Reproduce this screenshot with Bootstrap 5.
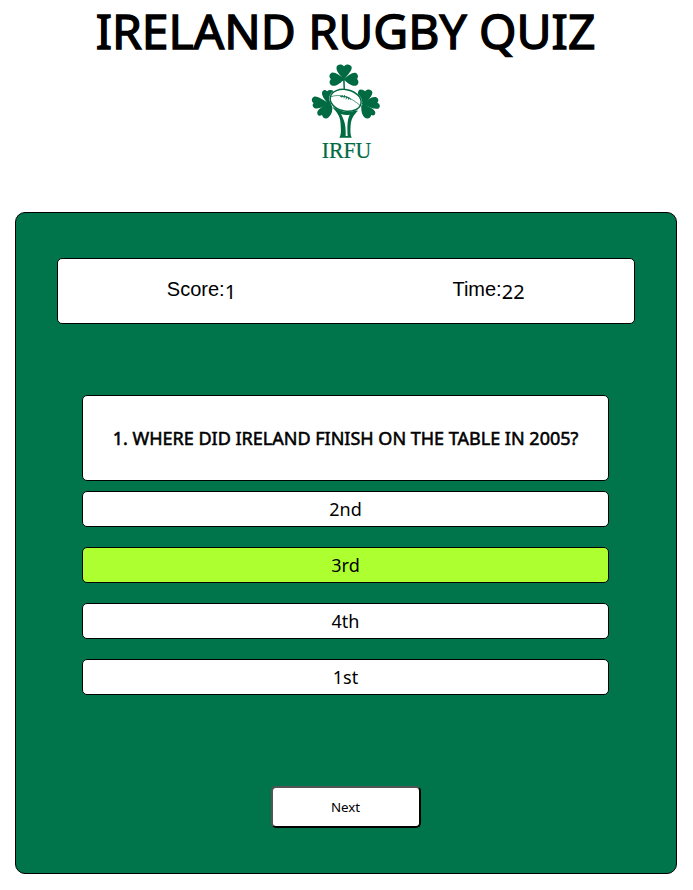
<!DOCTYPE html>
<html lang="en">
<head>
<meta charset="utf-8">
<meta name="viewport" content="width=device-width, initial-scale=1">
<title>Ireland Rugby Quiz</title>
<link rel="stylesheet" href="https://cdn.jsdelivr.net/npm/bootstrap@5.3.0/dist/css/bootstrap.min.css">
<style>
body{font-family:"Noto Sans",sans-serif;color:#000;background:#fff;line-height:1.36}
.page-head{width:691px}
.quiz-title{font-size:48px;line-height:62px;margin:0 0 -4px;font-weight:400;-webkit-text-stroke:1.4px #000;white-space:nowrap}
.logo{width:92px;height:106px}
.quiz-panel{width:662px;height:662px;margin:48px 0 0 15px;padding:45px 41px;background:#00754c;border:1px solid #000;border-radius:10px}
.box{background:#fff;border:1px solid #000;border-radius:5px}
.scores{height:66px;width:578px;font-size:20px;padding-right:2px}
.scores .tag{font-family:"Liberation Sans",Arial,sans-serif;line-height:23px;padding-top:3px}
.scores .num{line-height:27px;padding-top:3px}
.quiz-body{width:527px;margin:71px 1px 0 0}
.question{height:86px;font-size:18px;padding-top:1px;-webkit-text-stroke:.55px #000;margin-bottom:10px}
.answers{row-gap:20px}
.answer{height:36px;font-size:18px;padding:0;color:#000}
.right-answer{background:#adff2f}
.next{width:150px;height:42px;margin-top:91px;font-size:13.333px;padding:0 1px 0 0;background:#fff;border:2px outset #000;border-radius:5px;color:#000}
</style>
</head>
<body>
<header class="page-head d-flex flex-column align-items-center">
<h1 class="quiz-title text-center text-uppercase">Ireland Rugby Quiz</h1>
<svg class="logo d-block" viewBox="0 0 276 318" role="img" aria-label="IRFU">
<g fill="#006a43">
<path d="M131 64C121 52 106 38 110 26C114 17 126 18 132 25C139 17 151 18 155 27C157 38 141 52 133 64Z"/>
<path d="M132 63C120 53 106 42 95 44C86 49 87 59 93 63C86 70 88 80 97 83C112 85 123 72 132 65Z"/>
<path d="M132 63C144 53 157 42 168 45C176 50 175 58 171 63C178 69 176 80 168 83C153 85 141 73 132 65Z"/>
<path d="M129 62H134L135 98H131Z"/>
<path d="M90 142C78 130 65 116 66 104C68 94 76 94 81 100C88 93 100 95 102 102L106 130Z"/>
<path d="M90 139C74 143 54 156 43 150C36 145 37 139 41 135C33 130 34 120 42 116C56 114 70 128 90 136Z"/>
<path d="M88 136C66 147 50 154 52 167C54 175 61 174 66 171C69 182 79 185 86 178C96 168 99 156 96 143Z"/>
<path d="M187 139L174 111C173 98 178 94 184 95C190 95 193 97 195 100C202 91 214 93 217 102C218 114 204 127 193 138Z"/>
<path d="M188 138C204 124 218 113 229 118C237 123 236 130 232 134C241 137 242 147 235 152C222 155 207 145 190 140Z"/>
<path d="M190 137C203 145 225 152 226 164C226 172 219 174 214 171C211 182 201 185 193 178C184 168 183 152 184 141Z"/>
<path d="M97 148C117 168 122 183 122 201C123 220 124 229 118 239H155C150 229 151 216 152 201C153 183 161 171 174 158Z"/>
</g>
<ellipse cx="137" cy="127" rx="50" ry="34" transform="rotate(12 137 127)" fill="#fff"/>
<ellipse cx="137" cy="127" rx="47" ry="32" transform="rotate(12 137 127)" fill="#fff" stroke="#006a43" stroke-width="4.5"/>
<path d="M123 168Q136 173 149 170C141 186 142 211 143 234H137C138 205 134 188 123 168Z" fill="#fff"/>
<g fill="none" stroke="#006a43">
<path d="M91 117C119 105 154 118 181 143" stroke-width="2"/>
<path d="M120 115Q138 113 153 124M127 111L125 119M134 111L132 121M141 114L138 124M147 117L145 125" stroke-width="2.5"/>
</g>
<text x="65" y="299" textLength="149" lengthAdjust="spacingAndGlyphs" font-family="Liberation Serif,serif" font-size="71" fill="#006a43" stroke="#006a43" stroke-width=".6">IRFU</text>
</svg>
</header>
<main class="quiz-panel d-flex flex-column align-items-center">
<section class="box scores d-flex">
<div class="col-6 d-flex justify-content-center align-items-start pt-3"><span class="tag">Score:</span><span class="num">1</span></div>
<div class="col-6 d-flex justify-content-center align-items-start pt-3"><span class="tag">Time:</span><span class="num">22</span></div>
</section>
<section class="quiz-body">
<div class="box question d-flex align-items-center justify-content-center text-uppercase">1. Where did Ireland finish on the table in 2005?</div>
<div class="d-grid answers">
<button class="box answer">2nd</button>
<button class="box answer right-answer">3rd</button>
<button class="box answer">4th</button>
<button class="box answer">1st</button>
</div>
</section>
<button class="next">Next</button>
</main>
<script src="https://cdn.jsdelivr.net/npm/bootstrap@5.3.0/dist/js/bootstrap.bundle.min.js"></script>
</body>
</html>
